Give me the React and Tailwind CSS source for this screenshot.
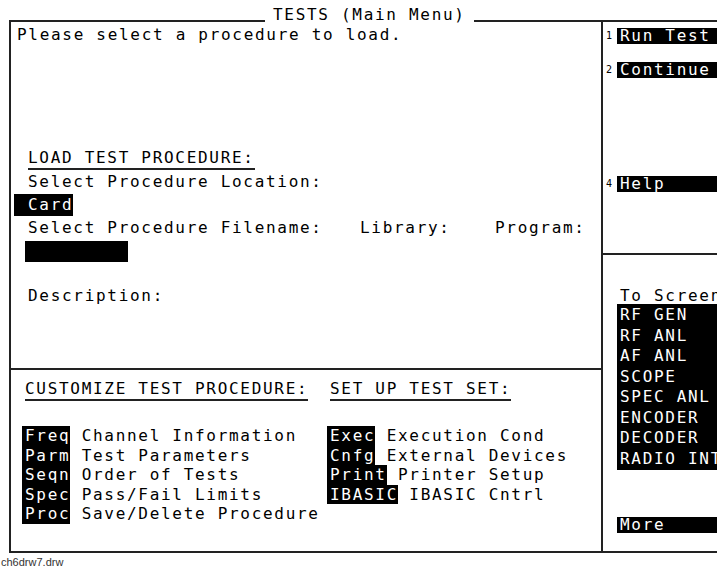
import React from 'react';

// Tests main menu screen of the test set, drawn as a character grid (~11.3px pitch)
const customize = [
  ['Freq', 'Channel Information'],
  ['Parm', 'Test Parameters'],
  ['Seqn', 'Order of Tests'],
  ['Spec', 'Pass/Fail Limits'],
  ['Proc', 'Save/Delete Procedure'],
];

const setup = [
  ['Exec', 'Execution Cond'],
  ['Cnfg', 'External Devices'],
  ['Print', 'Printer Setup'],
  ['IBASIC', 'IBASIC Cntrl'],
];

const screens = ['RF GEN', 'RF ANL', 'AF ANL', 'SCOPE', 'SPEC ANL', 'ENCODER', 'DECODER', 'RADIO INT'];

const SoftKey = ({ num, label, className = '' }) => (
  <div className={`flex items-center h-[16px] ${className}`}>
    <span className="w-[14px] pl-[3px] text-[10px] leading-[10px] tracking-normal">{num}</span>
    <span className="flex-1 bg-black text-white pl-[3px] leading-[16px] whitespace-pre">{label}</span>
  </div>
);

const App = () => {
  return (
    <div className="w-[717px] h-[567px] overflow-hidden bg-white text-black font-['DejaVu_Sans_Mono',monospace] text-[16px] leading-[16px] tracking-[1.7px]">
      {/* Title row, its bottom borders form the frame's top line */}
      <div className="flex items-end h-[22px] pl-[9px]">
        <div className="w-[256px] border-b-2 border-[#222]" />
        <div className="mx-[8px] whitespace-pre -mb-[1px]">TESTS (Main Menu)</div>
        <div className="flex-1 border-b-2 border-[#222]" />
      </div>

      {/* Frame body */}
      <div className="ml-[9px] h-[531px] border-l-2 border-b-2 border-[#222] flex">
        {/* Left column */}
        <div className="w-[590px] shrink-0 flex flex-col">
          <div className="h-[346px] pl-[6px] whitespace-pre">
            <div className="mt-[5px]">Please select a procedure to load.</div>

            <div className="mt-[107px] pl-[11px]">
              <span className="inline-block border-b-2 border-[#222] pb-[2px]">LOAD TEST PROCEDURE:</span>
            </div>
            <div className="mt-[4px] pl-[11px]">Select Procedure Location:</div>
            <div className="mt-[4px] -ml-[3px]">
              <span className="inline-block bg-black text-white pl-[14px] leading-[22px]">Card</span>
            </div>
            <div className="mt-[4px] pl-[11px] flex">
              <span className="w-[332px]">Select Procedure Filename:</span>
              <span className="w-[135px]">Library:</span>
              <span>Program:</span>
            </div>
            <div className="mt-[5px] ml-[8px] w-[103px] h-[21px] bg-black" />
            <div className="mt-[26px] pl-[11px]">Description:</div>
          </div>

          <div className="flex-1 border-t-2 border-[#222] pl-[14px] whitespace-pre">
            <div className="mt-[11px] flex">
              <div className="w-[305px]">
                <span className="inline-block border-b-2 border-[#222] pb-[2px]">CUSTOMIZE TEST PROCEDURE:</span>
              </div>
              <div>
                <span className="inline-block border-b-2 border-[#222] pb-[2px]">SET UP TEST SET:</span>
              </div>
            </div>
            <div className="mt-[25px] flex">
              <div className="w-[305px]">
                {customize.map(([k, v]) => (
                  <div key={k} className="leading-[19.5px] -ml-[3px]">
                    <span className="bg-black text-white pl-[3px] inline-block">{k}</span> {v}
                  </div>
                ))}
              </div>
              <div>
                {setup.map(([k, v]) => (
                  <div key={k} className="leading-[19.5px] -ml-[3px]">
                    <span className="bg-black text-white pl-[3px] inline-block">{k}</span> {v}
                  </div>
                ))}
              </div>
            </div>
          </div>
        </div>

        {/* Right column: soft keys */}
        <div className="flex-1 min-w-0 overflow-hidden border-l-2 border-[#222] flex flex-col">
          <div className="h-[231px]">
            <SoftKey num="1" label="Run Test" className="mt-[6px]" />
            <SoftKey num="2" label="Continue" className="mt-[18px]" />
            <SoftKey num="4" label="Help" className="mt-[98px]" />
          </div>
          <div className="flex-1 border-t-2 border-[#222] whitespace-pre">
            <div className="mt-[33px] pl-[17px]">To Screen</div>
            <div className="ml-[14px] bg-black text-white pl-[3px] py-[1px]">
              {screens.map((s) => (
                <div key={s} className="leading-[20.5px]">{s}</div>
              ))}
            </div>
            <div className="mt-[47px] ml-[14px] bg-black text-white pl-[3px] leading-[16px]">More</div>
          </div>
        </div>
      </div>

      <div className="mt-[3px] pl-[1px] font-['Liberation_Sans',Arial,sans-serif] text-[11px] leading-[13px] tracking-normal text-[#333]">
        ch6drw7.drw
      </div>
    </div>
  );
};

export default App;
